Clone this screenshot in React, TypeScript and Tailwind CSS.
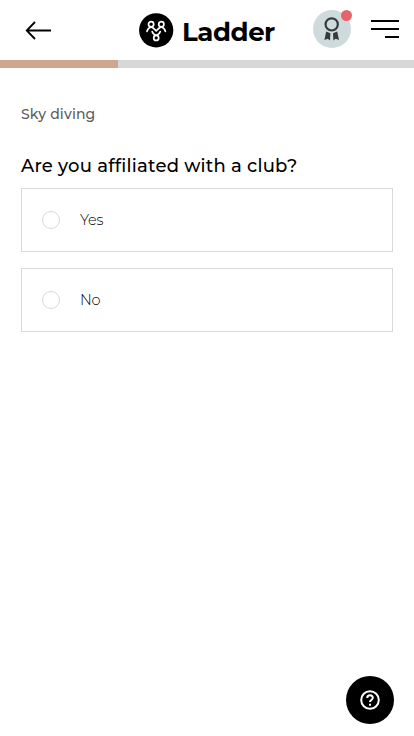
function Logo() {
  return (
    <svg className="h-[35px] w-[35px] shrink-0" viewBox="0 0 35 35" fill="none">
      <circle cx="17.2" cy="17.3" r="17.1" fill="#000" />
      <g stroke="#fff" strokeWidth="1.7" strokeLinecap="round" strokeLinejoin="round">
        <circle cx="12.1" cy="11.2" r="2.6" />
        <circle cx="22.3" cy="11.2" r="2.6" />
        <circle cx="17.2" cy="24.9" r="2.5" />
        <path d="M8 18.4C8.4 16.2 9.9 14.9 12.1 13.8C14.3 14.9 15.4 16 17.2 17.8C19 16 20.1 14.9 22.3 13.8C24.5 14.9 26 16.2 26.4 18.4" />
        <path d="M13.2 18.6C13.6 20.6 15 21.4 17.2 22.4C19.4 21.4 20.8 20.6 21.2 18.6" />
      </g>
    </svg>
  );
}

function Option({ label }: { label: string }) {
  return (
    <label className="flex h-16 items-center border border-[#d9d9d9] pl-5">
      <span className="h-[18px] w-[18px] rounded-full border border-[#d8d8d8]" />
      <span className="ml-5 text-[14.5px] leading-5 font-light tracking-[-0.2px] text-black">{label}</span>
    </label>
  );
}

export default function App() {
  return (
    <div className="flex h-[736px] w-[414px] flex-col bg-white font-['Montserrat','Inter',sans-serif]">
      <header className="flex h-[60px] items-center">
        <button className="ml-[25px] h-5 w-[27px]" aria-label="Back">
          <svg className="h-5 w-[27px]" viewBox="0 0 27 20" fill="none" stroke="#000" strokeWidth="1.8">
            <path d="M26 10.5H2M10 2L1.7 10.5L10 19" />
          </svg>
        </button>
        <div className="ml-[87px] flex items-center">
          <Logo />
          <span className="ml-[8px] mt-1 w-[95px] text-[26px] leading-8 font-bold tracking-[-0.45px] text-black">Ladder</span>
        </div>
        <div className="relative mt-[-2px] ml-[36px] h-[38px] w-[38px] shrink-0 rounded-full bg-[#cfdadc]">
          <svg className="h-[38px] w-[38px]" viewBox="0 0 38 38" fill="none">
            <circle cx="18.7" cy="14.4" r="6.1" stroke="#343a3c" strokeWidth="2.2" />
            <path d="M13.2 21.5L17.4 23.2L17 30.5L14.8 28.8L11.4 30ZM24.2 21.5L20 23.2L20.4 30.5L22.6 28.8L26 30Z" fill="#343a3c" />
          </svg>
          <span className="absolute top-0 left-[28px] h-[11px] w-[11px] rounded-full bg-[#e3646b]" />
        </div>
        <button className="ml-5 mt-[-2px] flex flex-col items-end gap-1.5" aria-label="Menu">
          <span className="h-0.5 w-7 bg-black" />
          <span className="h-0.5 w-7 bg-black" />
          <span className="h-0.5 w-3.5 bg-black" />
        </button>
      </header>
      <div className="h-2 w-full bg-[#d8d8d8]">
        <div className="h-2 w-[118px] bg-[#cfa78e]" />
      </div>
      <main className="flex flex-1 flex-col px-[21px] pt-9">
        <p className="text-[14px] leading-5 font-medium tracking-[0.15px] text-[#5c5c5c]">Sky diving</p>
        <h1 className="mt-[30px] text-[18px] leading-6 font-medium tracking-[0.22px] whitespace-nowrap text-black">
          Are you affiliated with a club?
        </h1>
        <div className="mt-[10px] flex flex-col gap-4">
          <Option label="Yes" />
          <Option label="No" />
        </div>
        <button className="mt-auto mr-[-1px] mb-3 flex h-12 w-12 items-center justify-center self-end rounded-full bg-black" aria-label="Help">
          <svg className="h-5 w-5" viewBox="0 0 20 20" fill="none" stroke="#fff" strokeWidth="2">
            <circle cx="10" cy="10" r="8.8" />
            <path d="M7.2 8.1C7.2 4.4 12.8 4.4 12.8 7.8C12.8 10 10 9.9 10 12" />
            <path d="M10 13.7V15.7" />
          </svg>
        </button>
      </main>
    </div>
  );
}
